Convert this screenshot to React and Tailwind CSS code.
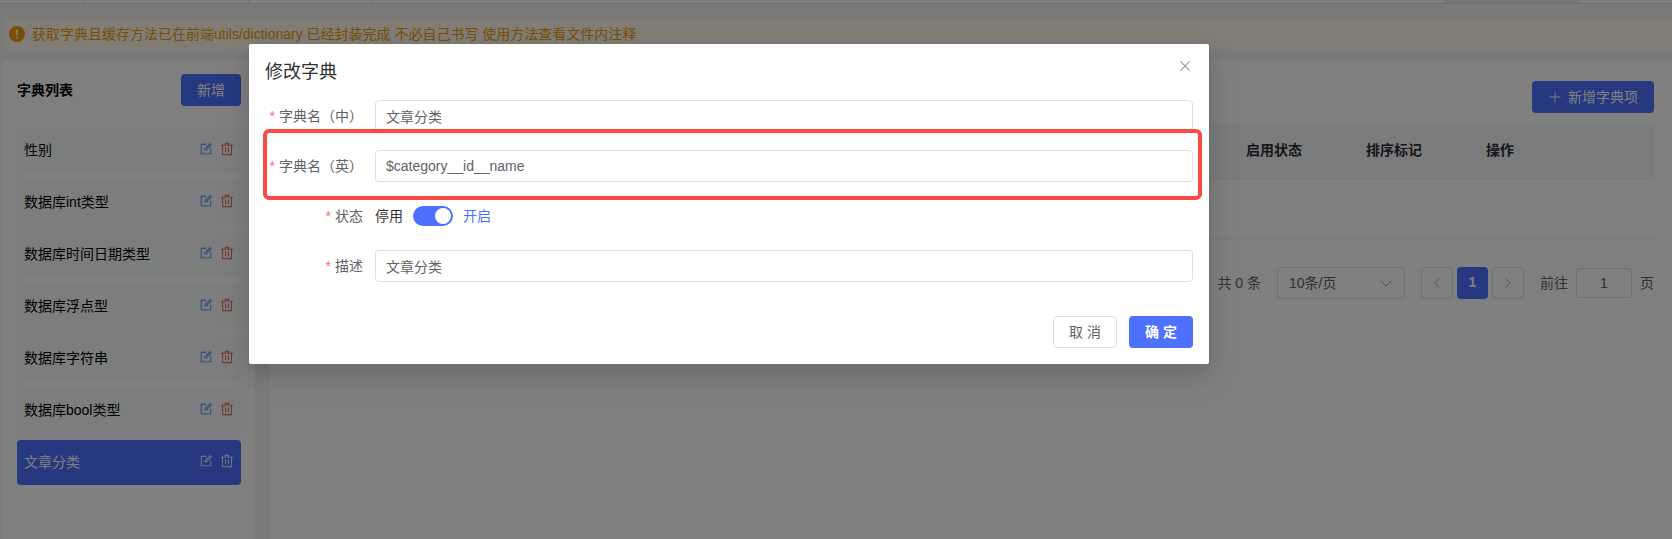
import React, { useState } from "react";

const dictionaries = [
  "性别",
  "数据库int类型",
  "数据库时间日期类型",
  "数据库浮点型",
  "数据库字符串",
  "数据库bool类型",
  "文章分类",
];

function EditIcon() {
  return (
    <svg viewBox="0 0 1024 1024" className="size-3.5" fill="currentColor" aria-hidden="true">
      <path d="M832 512a32 32 0 1 1 64 0v352a32 32 0 0 1-32 32H160a32 32 0 0 1-32-32V160a32 32 0 0 1 32-32h352a32 32 0 0 1 0 64H192v640h640z" />
      <path d="m469.952 554.24 52.8-7.552L847.104 222.4a32 32 0 1 0-45.248-45.248L477.44 501.44l-7.552 52.8zm422.4-422.4a96 96 0 0 1 0 135.808l-331.84 331.84a32 32 0 0 1-18.112 9.088L436.8 623.68a32 32 0 0 1-36.224-36.224l15.104-105.6a32 32 0 0 1 9.024-18.112l331.904-331.84a96 96 0 0 1 135.744 0z" />
    </svg>
  );
}

function DeleteIcon() {
  return (
    <svg viewBox="0 0 1024 1024" className="size-3.5" fill="currentColor" aria-hidden="true">
      <path d="M160 256H96a32 32 0 0 1 0-64h256V95.936a32 32 0 0 1 32-32h256a32 32 0 0 1 32 32V192h256a32 32 0 1 1 0 64h-64v672a32 32 0 0 1-32 32H192a32 32 0 0 1-32-32zm448-64v-64H416v64zM224 896h576V256H224zm192-128a32 32 0 0 1-32-32V416a32 32 0 0 1 64 0v320a32 32 0 0 1-32 32m192 0a32 32 0 0 1-32-32V416a32 32 0 0 1 64 0v320a32 32 0 0 1-32 32" />
    </svg>
  );
}

function CloseIcon() {
  return (
    <svg viewBox="0 0 1024 1024" className="size-4" fill="currentColor" aria-hidden="true">
      <path d="M764.288 214.592 512 466.88 259.712 214.592a31.936 31.936 0 0 0-45.12 45.12L466.752 512 214.528 764.224a31.936 31.936 0 1 0 45.12 45.184L512 557.184l252.288 252.288a31.936 31.936 0 0 0 45.12-45.12L557.12 512.064l252.288-252.352a31.936 31.936 0 1 0-45.12-45.184z" />
    </svg>
  );
}

function PlusIcon() {
  return (
    <svg viewBox="0 0 1024 1024" className="size-3.5" fill="currentColor" aria-hidden="true">
      <path d="M480 480V128a32 32 0 0 1 64 0v352h352a32 32 0 1 1 0 64H544v352a32 32 0 1 1-64 0V544H128a32 32 0 0 1 0-64z" />
    </svg>
  );
}

function WarningIcon() {
  return (
    <svg viewBox="64 64 896 896" className="size-4 text-[#f59e0b]" fill="currentColor" aria-hidden="true">
      <path d="M512 64a448 448 0 1 1 0 896 448 448 0 0 1 0-896m0 192a58.432 58.432 0 0 0-58.24 63.744l23.36 256.384a35.072 35.072 0 0 0 69.76 0l23.296-256.384A58.432 58.432 0 0 0 512 256m0 512a51.2 51.2 0 1 0 0-102.4 51.2 51.2 0 0 0 0 102.4" />
    </svg>
  );
}

function Chevron({ d }) {
  return (
    <svg viewBox="0 0 14 14" className="size-3.5" fill="none" stroke="currentColor" strokeLinecap="round" aria-hidden="true">
      <path d={d} />
    </svg>
  );
}

function TabStrip() {
  return (
    <div className="flex h-1 shrink-0 border-b border-[#dcdfe6] bg-white">
      <span className="w-21 border-r border-[#e4e7ed]" />
      <span className="w-[165px] border-r border-[#e4e7ed]" />
      <span className="w-[123px] border-r border-[#e4e7ed]" />
      <span className="flex-1" />
      <span className="w-[138px] bg-[#edf0f7]" />
      <span className="w-[92px]" />
    </div>
  );
}

function Sidebar() {
  const [active, setActive] = useState(6);
  return (
    <aside className="w-[252px] shrink-0 bg-white p-3.5">
      <div className="flex items-center justify-between">
        <h2 className="text-sm font-bold text-black">字典列表</h2>
        <button type="button" className="h-8 rounded bg-[#4d70ff] px-4 text-sm text-white">
          新增
        </button>
      </div>
      <ul className="mt-[22px] flex flex-col gap-[7px]">
        {dictionaries.map((name, i) => (
          <li
            key={name}
            className={
              "flex h-[45px] items-center rounded px-[7px] " +
              (i === active ? "bg-[#4d70ff] text-white" : "bg-[#f8fbfa] text-black")
            }
          >
            <button type="button" className="flex-1 pb-0.5 text-left" onClick={() => setActive(i)}>
              {name}
            </button>
            <div className="flex gap-[7px] pb-1">
              <button type="button" aria-label="编辑" className={i === active ? "text-white" : "text-[#3b82f6]"}>
                <EditIcon />
              </button>
              <button type="button" aria-label="删除" className={i === active ? "text-white" : "text-[#ef4444]"}>
                <DeleteIcon />
              </button>
            </div>
          </li>
        ))}
      </ul>
    </aside>
  );
}

function Pagination() {
  return (
    <nav className="mt-7 flex items-center justify-end text-[#606266]" aria-label="分页">
      <span className="mr-4">共 0 条</span>
      <div className="relative mr-4">
        <select
          aria-label="每页条数"
          className="h-8 w-32 appearance-none rounded border border-[#dcdfe6] bg-white pr-8 pl-[11px]"
          defaultValue="10"
        >
          <option value="10">10条/页</option>
        </select>
        <span className="pointer-events-none absolute top-[9px] right-3 text-[#a8abb2]">
          <Chevron d="M2 5 L7 10 L12 5" />
        </span>
      </div>
      <div className="mr-4 flex gap-1">
        <button
          type="button"
          aria-label="上一页"
          className="flex size-8 items-center justify-center rounded border border-[#dcdfe6] text-[#a8abb2]"
        >
          <Chevron d="M9 3 L5 7 L9 11" />
        </button>
        <button type="button" className="h-8 w-[31px] rounded bg-[#4d70ff] pb-0.5 font-bold text-white">
          1
        </button>
        <button
          type="button"
          aria-label="下一页"
          className="flex size-8 items-center justify-center rounded border border-[#dcdfe6] text-[#a8abb2]"
        >
          <Chevron d="M5 3 L9 7 L5 11" />
        </button>
      </div>
      <label className="flex items-center gap-2">
        前往
        <input
          defaultValue="1"
          aria-label="页码"
          className="h-[30px] w-14 rounded border border-[#dcdfe6] bg-white text-center"
        />
        页
      </label>
    </nav>
  );
}

function Content() {
  return (
    <main className="min-w-0 flex-1 bg-white px-[18px] pt-[21px]">
      <div className="flex justify-end">
        <button type="button" className="flex h-8 items-center gap-1.5 rounded bg-[#4d70ff] px-4 text-white">
          <PlusIcon />
          新增字典项
        </button>
      </div>
      <table className="mt-[11px] w-full table-fixed border-collapse text-left">
        <thead>
          <tr className="h-[54px] border-b border-[#ebeef5] bg-[#f5f7fa] text-[#303133]">
            <td />
            <th className="w-[120px] px-3 pb-0.5 font-bold">启用状态</th>
            <th className="w-[120px] px-3 pb-0.5 font-bold">排序标记</th>
            <th className="w-[180px] px-3 pb-0.5 font-bold">操作</th>
          </tr>
        </thead>
        <tbody>
          <tr className="h-[60px] border-b border-[#ebeef5]">
            <td colSpan={4} />
          </tr>
        </tbody>
      </table>
      <Pagination />
    </main>
  );
}

function FormRow({ id, label, children }) {
  return (
    <div className="relative flex h-8 items-center">
      <label htmlFor={id} className="w-[110px] shrink-0 pr-3 text-right text-[#606266]">
        <span className="mr-1 text-[#f56c6c]">*</span>
        {label}
      </label>
      {children}
    </div>
  );
}

function TextField({ id, value }) {
  return (
    <input
      id={id}
      defaultValue={value}
      className="h-8 min-w-0 flex-1 rounded border border-[#dcdfe6] bg-white px-2.5 text-[#606266]"
    />
  );
}

function Dialog() {
  return (
    <div className="absolute inset-0 bg-black/50 pt-11 pr-[463px] pl-[249px]">
      <section
        role="dialog"
        aria-labelledby="dialog-title"
        className="rounded-xs bg-white p-4 shadow-[0_12px_32px_4px_rgba(0,0,0,0.06),0_8px_20px_rgba(0,0,0,0.12)]"
      >
        <header className="flex justify-between">
          <h1 id="dialog-title" className="text-lg leading-6 text-[#303133]">
            修改字典
          </h1>
          <button type="button" aria-label="关闭" className="-mt-0.5 h-4 text-[#909399]">
            <CloseIcon />
          </button>
        </header>
        <form className="mt-4 flex flex-col gap-[18px]">
          <FormRow id="name-zh" label="字典名（中）">
            <TextField id="name-zh" value="文章分类" />
          </FormRow>
          <FormRow id="name-en" label="字典名（英）">
            <TextField id="name-en" value="$category__id__name" />
            <div className="pointer-events-none absolute -top-[21px] -right-[9px] -bottom-[18px] -left-0.5 z-10 rounded-md border-4 border-[#fa4a46]" />
          </FormRow>
          <FormRow id="status" label="状态">
            <label htmlFor="status" className="flex items-center gap-2.5 text-[#303133]">
              停用
              <input id="status" type="checkbox" role="switch" defaultChecked className="peer sr-only" />
              <span className="flex h-5 w-10 items-center rounded-full bg-[#dcdfe6] px-0.5 peer-checked:justify-end peer-checked:bg-[#4d70ff]">
                <span className="size-4 rounded-full bg-white" />
              </span>
              <span className="peer-checked:text-[#4d70ff]">开启</span>
            </label>
          </FormRow>
          <FormRow id="description" label="描述">
            <TextField id="description" value="文章分类" />
          </FormRow>
        </form>
        <footer className="mt-[34px] flex justify-end gap-3">
          <button type="button" className="h-8 w-16 rounded border border-[#dcdfe6] bg-white text-[#606266]">
            取 消
          </button>
          <button type="button" className="h-8 w-16 rounded bg-[#4d70ff] font-bold text-white">
            确 定
          </button>
        </footer>
      </section>
    </div>
  );
}

export default function App() {
  return (
    <div className="relative flex min-h-screen flex-col bg-[#f4f4f4] font-['Liberation_Sans','Noto_Sans_CJK_SC',sans-serif] text-sm leading-5">
      <TabStrip />
      <div className="flex flex-1 flex-col gap-2.5 pt-3.5 pl-[3px]">
        <div role="alert" className="flex h-8 items-center gap-[7px] rounded-l bg-[#fffaeb] px-1.5 text-[#f59e0b]">
          <WarningIcon />
          获取字典且缓存方法已在前端utils/dictionary 已经封装完成 不必自己书写 使用方法查看文件内注释
        </div>
        <div className="flex flex-1 gap-3.5">
          <Sidebar />
          <Content />
        </div>
      </div>
      <Dialog />
    </div>
  );
}
